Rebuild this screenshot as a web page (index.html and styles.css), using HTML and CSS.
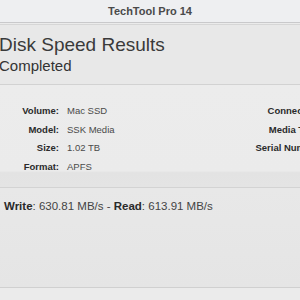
FILE: index.html
```html
<!doctype html>
<html lang="en">
  <head>
    <meta charset="utf-8">
    <meta name="viewport" content="width=device-width,initial-scale=1">
    <title>TechTool Pro 14</title>
    <link rel="stylesheet" href="styles.css">
  </head>

  <body>
    <div class="window">
      <header class="titlebar">TechTool Pro 14</header>

      <section class="summary">
        <h1>Disk Speed Results</h1>
        <p>Completed</p>
      </section>

      <section class="info">
        <dl class="specs left">
          <dt>Volume:</dt><dd>Mac SSD</dd>
          <dt>Model:</dt><dd>SSK Media</dd>
          <dt>Size:</dt><dd>1.02 TB</dd>
          <dt>Format:</dt><dd>APFS</dd>
        </dl>
        <dl class="specs right">
          <dt>Connection:</dt><dd>USB</dd>
          <dt>Media Type:</dt><dd>SSD</dd>
          <dt>Serial Number:</dt><dd>0000</dd>
        </dl>
      </section>

      <section class="results">
        <p><strong>Write</strong>: 630.81 MB/s - <strong>Read</strong>: 613.91 MB/s</p>
      </section>
    </div>
  </body>
</html>
```

FILE: styles.css
```css
body {
  margin: 0;
  overflow: hidden;
  background: #ebebeb;
  -webkit-font-smoothing: antialiased;
  font-family: "Liberation Sans", Arial, sans-serif;
  color: #333;
}

.window {
  width: 420px;
  height: 300px;
}

.titlebar {
  width: 300px;
  height: 22px;
  line-height: 22px;
  text-align: center;
  font-size: 11px;
  font-weight: bold;
  color: #4a4a4a;
  background: #eeeff1;
  border-bottom: 1px solid #c9c9cb;
}

.summary {
  margin-top: 1px;
  height: 51px;
  padding-top: 8px;
  margin-left: -1px;
  background: #e8e8e8;
  border-top: 1px solid #d6d6d6;
  border-bottom: 1px solid #d2d2d2;
}

.summary h1 {
  margin: 0;
  font-size: 19px;
  font-weight: normal;
  line-height: 23px;
  color: #3a3a3a;
}

.summary p {
  margin: 1px 0 0;
  font-size: 15px;
  line-height: 18px;
  color: #333;
}

.info {
  display: flex;
  height: 85px;
  padding-top: 17px;
  background: linear-gradient(to bottom, #ececec 0, #ebebeb 84%, #e3e3e3 86%, #e4e4e4 100%);
  border-bottom: 1px solid #d3d3d3;
}

.specs {
  display: grid;
  column-gap: 8px;
  margin: 0;
  font-size: 9.5px;
  line-height: 18.7px;
  align-content: start;
}

.specs.left {
  width: 200px;
  grid-template-columns: 59px auto;
}

.specs.right {
  grid-template-columns: 123px auto;
}

.specs dt {
  text-align: right;
  font-weight: bold;
  color: #2a2a2a;
}

.specs dd {
  margin: 0;
  color: #4a4a4a;
}

.results {
  height: 88px;
  padding: 11px 0 0 4px;
  background: linear-gradient(to bottom, #e8e8e8, #e5e5e5);
  border-bottom: 1px solid #d0d0d0;
}

.results p {
  margin: 0;
  font-size: 11.5px;
  line-height: 14px;
  color: #444;
}

.results strong {
  color: #2a2a2a;
}
```
